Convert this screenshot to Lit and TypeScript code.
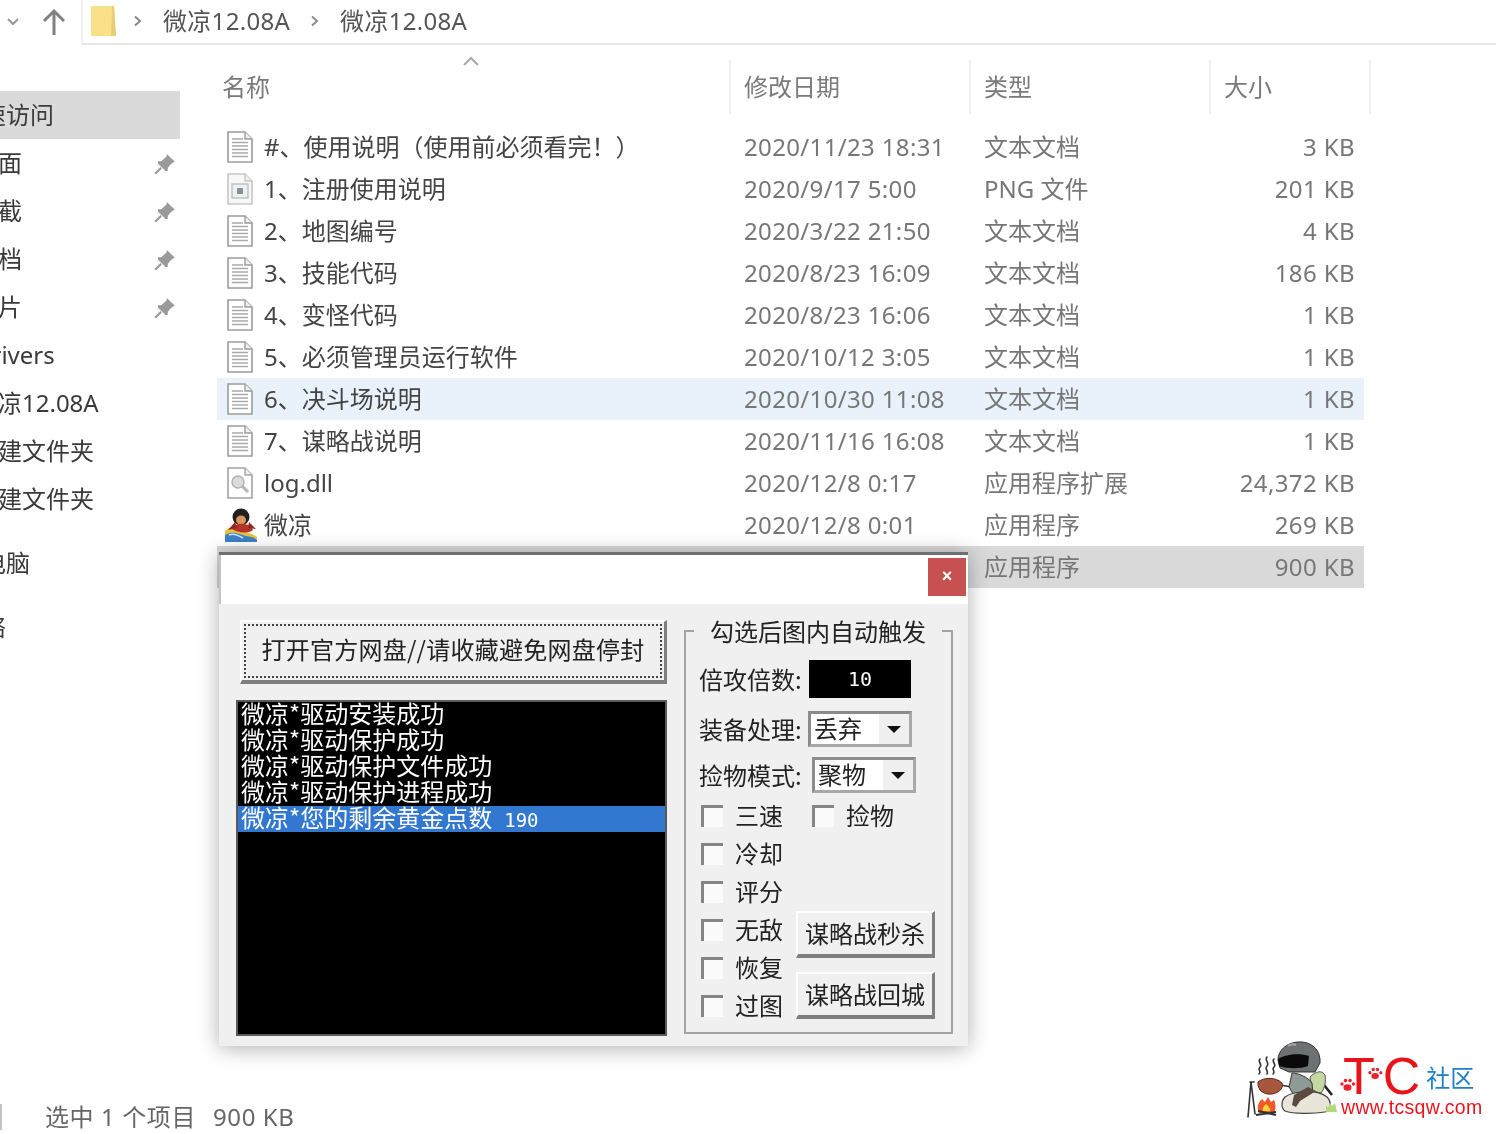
import { LitElement, html, css, svg } from "lit";
import { customElement } from "lit/decorators.js";

type Row = { icon: string; name: string; date: string; type: string; size: string; cls?: string };

const rows: Row[] = [
  { icon: "doc", name: "#、使用说明（使用前必须看完！）", date: "2020/11/23 18:31", type: "文本文档", size: "3 KB" },
  { icon: "png", name: "1、注册使用说明", date: "2020/9/17 5:00", type: "PNG 文件", size: "201 KB" },
  { icon: "doc", name: "2、地图编号", date: "2020/3/22 21:50", type: "文本文档", size: "4 KB" },
  { icon: "doc", name: "3、技能代码", date: "2020/8/23 16:09", type: "文本文档", size: "186 KB" },
  { icon: "doc", name: "4、变怪代码", date: "2020/8/23 16:06", type: "文本文档", size: "1 KB" },
  { icon: "doc", name: "5、必须管理员运行软件", date: "2020/10/12 3:05", type: "文本文档", size: "1 KB" },
  { icon: "doc", name: "6、决斗场说明", date: "2020/10/30 11:08", type: "文本文档", size: "1 KB", cls: "hover" },
  { icon: "doc", name: "7、谋略战说明", date: "2020/11/16 16:08", type: "文本文档", size: "1 KB" },
  { icon: "dll", name: "log.dll", date: "2020/12/8 0:17", type: "应用程序扩展", size: "24,372 KB" },
  { icon: "qq", name: "微凉", date: "2020/12/8 0:01", type: "应用程序", size: "269 KB" },
  { icon: "none", name: "", date: "", type: "应用程序", size: "900 KB", cls: "selected" },
];

const nav = [
  { t: "快速访问", cls: "deep active", pin: false },
  { t: "桌面", cls: "", pin: true },
  { t: "下截", cls: "", pin: true },
  { t: "文档", cls: "", pin: true },
  { t: "图片", cls: "", pin: true },
  { t: "Drivers", cls: "", pin: false },
  { t: "微凉12.08A", cls: "", pin: false },
  { t: "新建文件夹", cls: "", pin: false },
  { t: "新建文件夹", cls: "", pin: false },
  { t: "此电脑", cls: "deep group", pin: false },
  { t: "网络", cls: "deep group", pin: false },
];

const lines = ["微凉*驱动安装成功", "微凉*驱动保护成功", "微凉*驱动保护文件成功", "微凉*驱动保护进程成功"];

const docLines = svg`<g stroke="#aaaaaa" stroke-width="1.5"><path d="M5 8h11M5 11.5h16M5 15h16M5 18.5h16M5 22h16M5 25.5h16"/></g>`;

function fileIcon(kind: string) {
  if (kind === "none") return html`<span class="ic"></span>`;
  if (kind === "qq") {
    return html`<svg class="ic qq" viewBox="0 0 34 34" width="34" height="34">
      <path d="M1 23 C6 18 10 19 15 22 C21 25 27 24 33 29 L33 34 L1 34Z" fill="#e9c437"/>
      <path d="M1 27 C8 23 13 25 19 27 C24 29 29 28 33 32 L33 34 L1 34Z" fill="#3d7fc9"/>
      <path d="M5 27 C9 25 14 27 19 30" stroke="#cfe4f7" stroke-width="1.6" fill="none"/>
      <ellipse cx="17" cy="9" rx="8.5" ry="8.5" fill="#23201f"/>
      <ellipse cx="17" cy="12" rx="5" ry="4.6" fill="#d9935f"/>
      <path d="M8 21 C10 14 26 14 29 22 C24 26 13 25 8 21Z" fill="#b5342a"/>
      <path d="M4 22 L11 14 L13 20Z M32 21 L25 14 L24 20Z" fill="#8f2a22"/>
    </svg>`;
  }
  if (kind === "dll") {
    return html`<svg class="ic" viewBox="0 0 26 32" width="26" height="32">
      <path d="M1 1h17l7 7v23H1Z" fill="#fff" stroke="#a4a4a4" stroke-width="1.6"/>
      <path d="M18 1v7h7" fill="#eee" stroke="#a4a4a4" stroke-width="1.4"/>
      <circle cx="11" cy="15" r="6" fill="#dcdcdc" stroke="#b0b0b0" stroke-width="1.4"/>
      <path d="M15 19l6 6" stroke="#b4b4b4" stroke-width="3"/>
    </svg>`;
  }
  if (kind === "png") {
    return html`<svg class="ic" viewBox="0 0 26 32" width="26" height="32">
      <path d="M1 1h17l7 7v23H1Z" fill="#f8f8f8" stroke="#c6c6c6" stroke-width="1.6"/>
      <path d="M18 1v7h7" fill="#eee" stroke="#c6c6c6" stroke-width="1.4"/>
      <rect x="5" y="11" width="16" height="14" fill="#eef1f2" stroke="#b5b5b5" stroke-width="1.2"/>
      <rect x="10" y="15" width="6" height="6" fill="#7f9098"/>
    </svg>`;
  }
  return html`<svg class="ic" viewBox="0 0 26 32" width="26" height="32">
    <path d="M1 1h17l7 7v23H1Z" fill="#fff" stroke="#9c9c9c" stroke-width="1.6"/>
    <path d="M18 1v7h7" fill="#f0f0f0" stroke="#9c9c9c" stroke-width="1.4"/>
    ${docLines}
  </svg>`;
}

const pin = html`<svg class="pin" viewBox="0 0 22 22" width="24" height="24">
  <path d="M13 2 L20 9 L17.5 10 L13.5 14.5 L13.5 17.5 L11.5 17.5 L4.5 10.5 L4.5 8.5 L7.5 8.5 L12 4.5Z" fill="#9a9a9a"/>
  <path d="M7.5 14.5 L2 20" stroke="#9a9a9a" stroke-width="2"/>
</svg>`;

const paw = (x: number, y: number, s: number) => svg`<g transform="translate(${x} ${y}) scale(${s})" fill="#e8232a">
  <ellipse cx="7.5" cy="9.5" rx="4" ry="3.2"/><circle cx="2" cy="6" r="1.7"/><circle cx="5.5" cy="2.6" r="1.8"/><circle cx="10" cy="2.6" r="1.8"/><circle cx="13.5" cy="6" r="1.7"/>
</g>`;

@customElement("x-check")
class XCheck extends LitElement {
  static properties = { label: {} };
  label = "";
  static styles = css`
    :host { display: flex; align-items: center; height: 38px; font: 24px/38px "Noto Sans CJK SC", sans-serif; color: #222; }
    .box { width: 22px; height: 22px; box-sizing: border-box; border-top: 3px solid #858585; border-left: 3px solid #858585; background: #fbfbfb; margin: 1px 12px 0 0; flex: none; }
  `;
  render() {
    return html`<span class="box"></span><span>${this.label}</span>`;
  }
}

@customElement("x-select")
class XSelect extends LitElement {
  static properties = { value: {} };
  value = "";
  static styles = css`
    :host { display: flex; width: 104px; height: 36px; box-sizing: border-box; background: #fff; border: 3px solid #8b8b8b; border-right-color: #a8a8a8; border-bottom-color: #a8a8a8; font: 24px/28px "Noto Sans CJK SC", sans-serif; color: #222; }
    .v { flex: 1; padding-left: 3px; white-space: nowrap; }
    .b { width: 30px; background: #f0f0f0; display: flex; align-items: center; justify-content: center; }
    .a { width: 0; height: 0; border-left: 7px solid transparent; border-right: 7px solid transparent; border-top: 7px solid #111; }
  `;
  render() {
    return html`<span class="v">${this.value}</span><span class="b"><i class="a"></i></span>`;
  }
}

@customElement("app-root")
export class AppRoot extends LitElement {
  static styles = css`
    :host { display: block; width: 1496px; height: 1134px; overflow: hidden; position: relative; background: #fff; }
    .page { width: 1496px; height: 1134px; display: flex; flex-direction: column; background: #fff; font: 24px/1.2 "Noto Sans", "Noto Sans CJK SC", sans-serif; color: #3c3c3c; filter: blur(0.7px); }
    .bar { height: 44px; flex: none; display: flex; align-items: center; }
    .navs { width: 81px; display: flex; align-items: center; flex: none; }
    .chev { margin-left: 6px; }
    .up { margin-left: 21px; }
    .addr { flex: 1; height: 45px; box-sizing: border-box; border-bottom: 2px solid #e6e6e6; border-left: 2px solid #f2f2f2; display: flex; align-items: center; padding-left: 7px; color: #555; letter-spacing: 0.3px; }
    .crumb { margin-left: 20px; margin-right: 20px; }
    .crumb.first { margin-left: 16px; margin-right: 20px; }
    .body { flex: 1; display: flex; min-height: 0; }
    .side { width: 180px; flex: none; padding-top: 47px; overflow: hidden; box-sizing: border-box; }
    .it { height: 48px; display: flex; align-items: center; justify-content: space-between; white-space: nowrap; color: #3a3a3a; position: relative; }
    .it span { margin-left: -26px; }
    .it.deep span { margin-left: -42px; }
    .it.active { background: #dadada; }
    .it.group { margin-top: 16px; }
    .pin { position: absolute; right: 3px; top: 13px; }
    .main { flex: 1; padding-left: 37px; min-width: 0; }
    .cols { display: grid; grid-template-columns: 514px 240px 240px 160px; width: 1154px; height: 54px; margin-top: 16px; margin-bottom: 12px; color: #7a7a7a; position: relative; }
    .cols > div { border-right: 2px solid #f1f1f1; padding-left: 13px; line-height: 54px; box-sizing: border-box; }
    .cols > div:first-child { padding-left: 5px; }
    .caret { position: absolute; left: 245px; top: -4px; }
    .row { display: grid; grid-template-columns: 514px 240px 240px 153px; width: 1147px; height: 42px; align-items: center; color: #777; white-space: nowrap; }
    .row.hover { background: #e9f2fa; }
    .row.selected { background: #d9d9d9; }
    .name { display: flex; align-items: center; color: #444; padding-left: 10px; }
    .ic { width: 26px; height: 32px; margin-right: 11px; flex: none; }
    .ic.qq { width: 34px; height: 34px; margin-left: -3px; margin-right: 6px; }
    .date { padding-left: 13px; letter-spacing: 0.35px; }
    .type { padding-left: 13px; }
    .size { text-align: right; padding-right: 9px; letter-spacing: 0.4px; }
    .status { height: 38px; flex: none; display: flex; align-items: center; color: #666; padding-top: 4px; box-sizing: border-box; letter-spacing: 0.6px; }
    .status i { width: 2px; height: 26px; background: #c4c4c4; margin-right: 43px; }
    .status span + span { margin-left: 17px; }

    .dlg { position: absolute; left: 219px; top: 552px; width: 749px; height: 494px; background: #f0f0f0; box-shadow: 0 2px 20px rgba(0,0,0,.32); border-top: 3px solid #6f6f6f; box-sizing: border-box; color: #222; font: 24px/1.2 "Noto Sans CJK SC", sans-serif; }
    .title { height: 49px; background: #fff; border-left: 2px solid #c4c4c4; display: flex; justify-content: flex-end; padding: 3px 2px 0 0; box-sizing: border-box; }
    .close { width: 38px; height: 38px; background: #c75050; color: #fff; font: bold 18px/36px "Liberation Sans", sans-serif; text-align: center; }
    .dbody { display: grid; grid-template-columns: 427px 269px; column-gap: 17px; padding: 16px 0 0 21px; }
    .left { display: flex; flex-direction: column; gap: 16px; }
    .big { height: 64px; box-sizing: border-box; border: 2px solid #fff; border-right: 3px solid #7e7e7e; border-bottom: 4px solid #7e7e7e; padding: 2px; }
    .big div { height: 100%; box-sizing: border-box; border: 2px dotted #444; text-align: center; line-height: 46px; white-space: nowrap; letter-spacing: 0.25px; }
    .list { height: 336px; margin-left: -4px; box-sizing: border-box; background: #000; border: 2px solid #5a5a5a; color: #fff; }
    .list div { height: 26px; line-height: 22px; white-space: nowrap; padding-left: 3px; }
    .list .on { background: #3278d0; }
    .list .n { font-family: "DejaVu Sans Mono", monospace; font-size: 19px; margin-left: 12px; }
    fieldset { margin: 0; padding: 0 0 0 13px; border: 2px solid #a2a2a2; height: 414px; box-sizing: border-box; min-width: 0; }
    legend { margin-left: -5px; padding: 0 16px; line-height: 22px; white-space: nowrap; }
    .f { display: flex; align-items: center; white-space: nowrap; }
    .f1 { margin-top: 18px; height: 38px; }
    .f2 { margin-top: 13px; height: 36px; }
    .f3 { margin-top: 10px; height: 36px; }
    .lab { width: 109px; flex: none; }
    .f1 .lab { width: 110px; }
    .f3 .lab { width: 113px; }
    .num { width: 102px; height: 38px; background: #000; color: #fff; text-align: center; font: 20px/38px "DejaVu Sans Mono", monospace; }
    .opts { display: grid; grid-template-columns: 95px 139px; grid-template-rows: repeat(6, 38px); margin-top: 3px; margin-left: 2px; }
    .c2 { margin-left: 16px; }
    .btns { grid-column: 2; grid-row: 4 / span 3; display: flex; flex-direction: column; gap: 14px; padding-top: 1px; }
    .btn { height: 47px; box-sizing: border-box; background: #f0f0f0; border: 2px solid #fff; border-right: 3px solid #7e7e7e; border-bottom: 4px solid #7e7e7e; text-align: center; line-height: 40px; white-space: nowrap; }

    .logo { position: absolute; left: 1240px; top: 1035px; width: 256px; height: 85px; display: flex; background: #fff; }
    .brand { width: 156px; position: relative; font-family: "Liberation Sans", sans-serif; }
    .tc { height: 60px; display: flex; align-items: flex-start; color: #e8141c; font-size: 52px; line-height: 52px; padding: 15px 0 0 3px; box-sizing: border-box; }
    .tc .c { margin-left: 8px; }
    .tc em { font: 24px/30px "Noto Sans CJK SC", sans-serif; font-style: normal; color: #1f80c8; margin: 12px 0 0 6px; letter-spacing: 0; white-space: nowrap; }
    .paws { position: absolute; left: 0; top: 28px; }
    .www { color: #e8141c; font: 19.5px/24px "Liberation Sans", sans-serif; white-space: nowrap; letter-spacing: 0.3px; padding-left: 1px; }
  `;

  render() {
    return html`
      <div class="page">
        <div class="bar">
          <div class="navs">
            <svg class="chev" viewBox="0 0 14 10" width="14" height="10"><path d="M2 2l5 5 5-5" fill="none" stroke="#999" stroke-width="2"/></svg>
            <svg class="up" viewBox="0 0 26 28" width="26" height="28"><path d="M13 27V3M3 13L13 3l10 10" fill="none" stroke="#808080" stroke-width="3"/></svg>
          </div>
          <div class="addr">
            <svg viewBox="0 0 27 32" width="27" height="32"><path d="M1 1h23l2 30H1Z" fill="#fbe08a"/><path d="M24 1l2 30h-5l1-30Z" fill="#e9cd76"/></svg>
            <svg class="crumb first" viewBox="0 0 10 12" width="10" height="12"><path d="M2 1.5l5 4.5-5 4.5" fill="none" stroke="#8a8a8a" stroke-width="2"/></svg>
            <span>微凉12.08A</span>
            <svg class="crumb" viewBox="0 0 10 12" width="10" height="12"><path d="M2 1.5l5 4.5-5 4.5" fill="none" stroke="#8a8a8a" stroke-width="2"/></svg>
            <span>微凉12.08A</span>
          </div>
        </div>
        <div class="body">
          <div class="side">
            ${nav.map((n) => html`<div class="it ${n.cls}"><span>${n.t}</span>${n.pin ? pin : ""}</div>`)}
          </div>
          <div class="main">
            <div class="cols">
              <div>名称</div><div>修改日期</div><div>类型</div><div>大小</div>
              <svg class="caret" viewBox="0 0 18 10" width="18" height="10"><path d="M2 9l7-7 7 7" fill="none" stroke="#a8a8a8" stroke-width="2"/></svg>
            </div>
            ${rows.map((r) => html`<div class="row ${r.cls ?? ""}">
              <div class="name">${fileIcon(r.icon)}<span>${r.name}</span></div>
              <div class="date">${r.date}</div>
              <div class="type">${r.type}</div>
              <div class="size">${r.size}</div>
            </div>`)}
          </div>
        </div>
        <div class="status"><i></i><span>选中 1 个项目</span><span>900 KB</span></div>

        <div class="dlg">
          <div class="title"><div class="close">×</div></div>
          <div class="dbody">
            <div class="left">
              <div class="big"><div>打开官方网盘//请收藏避免网盘停封</div></div>
              <div class="list">
                ${lines.map((l) => html`<div>${l}</div>`)}
                <div class="on">微凉*您的剩余黄金点数<span class="n">190</span></div>
              </div>
            </div>
            <fieldset>
              <legend>勾选后图内自动触发</legend>
              <div class="f f1"><span class="lab">倍攻倍数:</span><span class="num">10</span></div>
              <div class="f f2"><span class="lab">装备处理:</span><x-select value="丢弃"></x-select></div>
              <div class="f f3"><span class="lab">捡物模式:</span><x-select value="聚物"></x-select></div>
              <div class="opts">
                <x-check label="三速"></x-check>
                <x-check class="c2" label="捡物"></x-check>
                <x-check label="冷却"></x-check><span></span>
                <x-check label="评分"></x-check><span></span>
                <x-check label="无敌"></x-check>
                <div class="btns">
                  <div class="btn">谋略战秒杀</div>
                  <div class="btn">谋略战回城</div>
                </div>
                <x-check label="恢复"></x-check>
                <x-check label="过图"></x-check>
              </div>
            </fieldset>
          </div>
        </div>

        <div class="logo">
          <svg viewBox="0 0 100 85" width="100" height="85">
            <g fill="none" stroke="#333" stroke-width="1.6" stroke-linecap="round">
              <path d="M20 24c-3 3 3 5 0 8s2 4-1 7M27 22c-3 3 3 6 0 9s2 5 0 8M34 24c-3 3 3 5 0 8s2 4-1 7"/>
              <path d="M11 47L8 82M11 47l4 32M10 47h4M40 50l24 4"/>
            </g>
            <path d="M76 40L92 60" stroke="#222" stroke-width="2.6"/>
            <path d="M70 42c6-6 12-7 15-2 1 6 0 13-4 18l-9-2Z" fill="#c5d8a4" stroke="#555" stroke-width="1"/>
            <path d="M52 38c6 0 16 4 20 10l1 12-18 2-6-10Z" fill="#8f9a96" stroke="#333" stroke-width="1"/>
            <path d="M18 47c6-5 18-5 24 1 2 5-3 10-10 11-7 1-15-3-14-12Z" fill="#a6573c" stroke="#5b2d1f" stroke-width="1"/>
            <path d="M45 62c8-6 32-8 42 0 5 5 4 14-2 15-12 2-32 2-40-1-4-3-4-10 0-14Z" fill="#e9e5d9" stroke="#444" stroke-width="1.2"/>
            <path d="M54 60l14-8 8 4-16 10-4 6-4-2Z" fill="#5a4a40"/>
            <path d="M38 25c0-11 11-19 24-18 12 1 19 10 18 21l-5 9H49l-9-4Z" fill="#6d7172" stroke="#333" stroke-width="1"/>
            <path d="M38 24c8-5 22-6 31-3l-1 10c-8 3-20 3-29 0Z" fill="#0a0a0a"/>
            <path d="M48 11c3-2 6-2 8-1" stroke="#a6a9a9" stroke-width="2" fill="none"/>
            <path d="M19 78c-3-6 0-12 3-14l3 3 3-5 3 5 3-2c2 4 2 9 0 13Z" fill="#ef5a2b"/>
            <path d="M23 76c-1-3 1-5 3-7 2 2 5 4 4 7Z" fill="#f7d733"/>
            <path d="M16 80l20-3M18 76l18 4" stroke="#333" stroke-width="2"/>
            <path d="M86 77v-7l2 3 2-5 2 3 3-3 2 9Z" fill="#b4d77c"/>
          </svg>
          <div class="brand">
            <div class="tc"><span>T</span><span class="c">C</span><em>社区</em></div>
            <svg class="paws" viewBox="0 0 60 40" width="60" height="40">${paw(0, 15, 1)}${paw(28, 4, 0.95)}</svg>
            <div class="www">www.tcsqw.com</div>
          </div>
        </div>
      </div>
    `;
  }
}
void XCheck; void XSelect;
